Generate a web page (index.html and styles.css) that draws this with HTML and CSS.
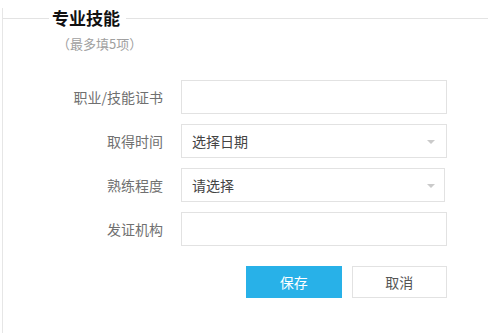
FILE: index.html
```html
<!DOCTYPE html>
<html lang="zh-CN">
<head>
<meta charset="utf-8">
<title>专业技能</title>
<link rel="stylesheet" href="styles.css">
</head>
<body>
<div class="panel">
  <div class="head">
    <span class="rule rule-left"></span>
    <h2 class="title">专业技能</h2>
    <span class="rule rule-right"></span>
  </div>
  <p class="hint">（最多填5项）</p>
  <form class="form">
    <label class="label">职业/技能证书</label>
    <div class="field"></div>
    <label class="label">取得时间</label>
    <div class="field select"><span class="value">选择日期</span><span class="arrow"></span></div>
    <label class="label">熟练程度</label>
    <div class="field select select-narrow"><span class="value">请选择</span><span class="arrow"></span></div>
    <label class="label">发证机构</label>
    <div class="field"></div>
    <div class="actions">
      <button type="button" class="btn btn-primary">保存</button>
      <button type="button" class="btn btn-default">取消</button>
    </div>
  </form>
</div>
</body>
</html>
```
FILE: styles.css
```css
html, body {
  margin: 0;
  padding: 0;
  background: #fff;
}
body {
  font-family: "Noto Sans CJK SC", "Noto Sans", sans-serif;
  overflow: hidden;
}
.panel {
  margin-left: 2px;
  border-left: 1px solid #e6e6e6;
  min-height: 333px;
  box-sizing: border-box;
}
.head {
  display: flex;
  align-items: center;
  height: 20px;
  margin-top: 8px;
}
.rule {
  height: 1px;
  background: #e3e3e3;
}
.rule-left {
  width: 46px;
  flex: 0 0 46px;
}
.rule-right {
  flex: 1;
}
.title {
  margin: 0 6px 0 3px;
  font-size: 17px;
  line-height: 20px;
  font-weight: bold;
  color: #111;
}
.hint {
  margin: 8px 0 0 54px;
  font-size: 13px;
  line-height: 16px;
  color: #a0a0a0;
}
.form {
  display: grid;
  grid-template-columns: 160px 266px;
  column-gap: 18px;
  row-gap: 10px;
  margin-top: 28px;
}
.label {
  text-align: right;
  font-size: 14px;
  line-height: 34px;
  color: #707070;
}
.field {
  box-sizing: border-box;
  height: 34px;
  border: 1px solid #e2e2e2;
  background: #fff;
}
.select {
  display: flex;
  align-items: center;
  justify-content: space-between;
  padding: 0 11px 0 10px;
}
.select-narrow {
  width: 264px;
  padding-right: 9px;
}
.value {
  font-size: 14px;
  color: #444;
}
.arrow {
  width: 0;
  height: 0;
  border-left: 4px solid transparent;
  border-right: 4px solid transparent;
  border-top: 4px solid #cacaca;
  margin-top: 1px;
}
.actions {
  grid-column: 2;
  display: flex;
  gap: 10px;
  margin-top: 10px;
  padding-left: 65px;
}
.btn {
  box-sizing: border-box;
  width: 96px;
  height: 32px;
  font-family: inherit;
  font-size: 14px;
  cursor: pointer;
  padding: 0;
}
.btn-primary {
  background: #28b1e8;
  border: none;
  color: #fff;
}
.btn-default {
  background: #fff;
  border: 1px solid #e2e2e2;
  color: #555;
}
```
